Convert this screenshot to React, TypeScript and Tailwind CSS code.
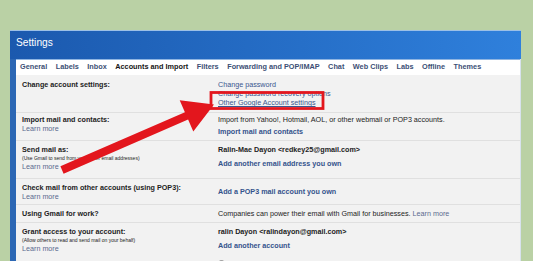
import React from "react";

const tabs = [
  "General",
  "Labels",
  "Inbox",
  "Accounts and Import",
  "Filters",
  "Forwarding and POP/IMAP",
  "Chat",
  "Web Clips",
  "Labs",
  "Offline",
  "Themes",
];

function LearnMore() {
  return <div className="h-[9px] leading-[9px] text-[#5b6a8f]">Learn more</div>;
}

export default function App() {
  return (
    <div
      className="relative h-[261px] w-[533px] overflow-hidden bg-[#bad1a5] pt-[30px] pl-[10px]"
      style={{ fontFamily: '"Liberation Sans", Arial, sans-serif' }}
    >
      <div className="w-[511px] border-t border-[#9cc0e6]">
        {/* Header */}
        <div className="h-[28px] bg-gradient-to-r from-[#1b59ae] to-[#2f80dc] pl-[6px] pt-[5px] text-[10.2px] leading-[14px] text-white">
          Settings
        </div>

        <div className="flex">
          <div className="w-[6px] bg-[#2c67b4]" />
          <div className="flex-1 border-r border-[#d8e2ee]">
            {/* Tabs */}
            <div className="flex h-[16px] items-center gap-[8.5px] border-t border-[#8fb5e2] bg-white pl-[4px] text-[7.3px] font-bold text-[#3c4f75]">
              {tabs.map((t) => (
                <span key={t} className={t === "Accounts and Import" ? "text-[#151515]" : ""}>
                  {t}
                </span>
              ))}
            </div>

            <div className="bg-[#f2f2f2] text-[7.2px] text-[#222]">
              {/* Row 1 */}
              <div className="flex h-[38px] border-b border-[#e0e0e0] pt-[5px] pl-[6px] leading-[9px]">
                <div className="w-[196px] font-bold">Change account settings:</div>
                <div className="text-[#3a578f]">
                  <div>Change password</div>
                  <div>Change password recovery options</div>
                  <div className="underline">Other Google Account settings</div>
                </div>
              </div>

              {/* Row 2 */}
              <div className="flex h-[28px] border-b border-[#e0e0e0] pt-[2px] pl-[6px] leading-[9px]">
                <div className="w-[196px]">
                  <div className="font-bold">Import mail and contacts:</div>
                  <LearnMore />
                </div>
                <div>
                  <div>Import from Yahoo!, Hotmail, AOL, or other webmail or POP3 accounts.</div>
                  <div className="mt-[3px] font-bold text-[#34528c]">Import mail and contacts</div>
                </div>
              </div>

              {/* Row 3 */}
              <div className="flex h-[38px] border-b border-[#e0e0e0] pt-[4px] pl-[6px] leading-[9px]">
                <div className="w-[196px]">
                  <div className="font-bold">Send mail as:</div>
                  <div className="h-[8px] text-[5px] leading-[8px]">(Use Gmail to send from your other email addresses)</div>
                  <LearnMore />
                </div>
                <div>
                  <div className="font-bold">Ralin-Mae Dayon &lt;redkey25@gmail.com&gt;</div>
                  <div className="mt-[5px] font-bold text-[#34528c]">Add another email address you own</div>
                </div>
              </div>

              {/* Row 4 */}
              <div className="flex h-[26px] border-b border-[#e0e0e0] pt-[4px] pl-[6px] leading-[9px]">
                <div className="w-[196px]">
                  <div className="font-bold">Check mail from other accounts (using POP3):</div>
                  <LearnMore />
                </div>
                <div className="pt-[4px] font-bold text-[#34528c]">Add a POP3 mail account you own</div>
              </div>

              {/* Row 5 */}
              <div className="flex h-[18px] items-center border-b border-[#e0e0e0] pl-[6px] leading-[9px]">
                <div className="w-[196px] font-bold">Using Gmail for work?</div>
                <div>
                  Companies can power their email with Gmail for businesses.{" "}
                  <span className="text-[#5b6a8f]">Learn more</span>
                </div>
              </div>

              {/* Row 6 */}
              <div className="flex h-[50px] pt-[4px] pl-[6px] leading-[9px]">
                <div className="w-[196px]">
                  <div className="font-bold">Grant access to your account:</div>
                  <div className="h-[8px] text-[5px] leading-[8px]">(Allow others to read and send mail on your behalf)</div>
                  <LearnMore />
                </div>
                <div>
                  <div className="font-bold">ralin Dayon &lt;ralindayon@gmail.com&gt;</div>
                  <div className="mt-[5px] font-bold text-[#34528c]">Add another account</div>
                  <div className="mt-[9px] flex items-center gap-[4px]">
                    <span className="h-[7px] w-[7px] rounded-full border border-[#888] bg-white" />
                    <span>Mark conversation as read when opened by others</span>
                  </div>
                </div>
              </div>
            </div>
          </div>
        </div>
      </div>

      {/* Annotation overlay */}
      <svg className="pointer-events-none absolute left-0 top-0" width="533" height="261" viewBox="0 0 533 261">
        <rect x="211" y="92.5" width="112" height="16" fill="none" stroke="#e3161d" strokeWidth="2.8" />
        <polygon
          points="60.4,166.3 184.9,112.2 179.7,100.3 214,104.5 193.3,131.5 188.1,119.6 63.6,173.7"
          fill="#e3161d"
        />
      </svg>
    </div>
  );
}
